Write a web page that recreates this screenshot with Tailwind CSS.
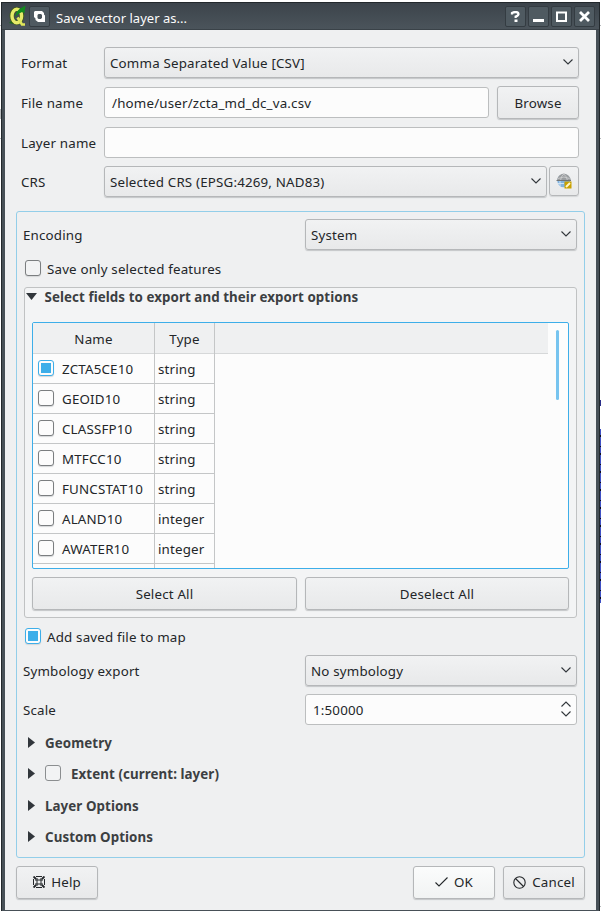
<!DOCTYPE html>
<html lang="en">
<head>
<meta charset="utf-8">
<title>Save vector layer as...</title>
<script src="https://cdn.jsdelivr.net/npm/@tailwindcss/browser@4"></script>
</head>
<body class="w-[601px] h-[911px] overflow-hidden bg-white flex text-[13.33px] leading-[18px] tracking-[0.18px] text-[#232629] font-['Noto_Sans',sans-serif]">

<!-- strip of the window behind, left edge -->
<div class="w-px pt-[25px] flex flex-col gap-[83px] shrink-0">
  <div class="h-px bg-[#b9bcbe]"></div><div class="h-[10px] bg-[#b9bcbe]"></div><div class="h-px -mt-[64px] bg-[#b9bcbe]"></div>
</div>

<div class="w-[599px] mt-[2px] h-[909px] bg-[#475057] border-l border-t border-[#22282c] shrink-0 flex flex-col border-r">
  <!-- title bar -->
  <div class="h-[27px] pl-[7px] pr-[4px] flex items-center bg-linear-to-b from-[#3c444b] to-[#4b545b] border-b border-[#3a4248] shrink-0">
    <svg class="w-[17px] h-[22px] shrink-0" viewBox="0 0 17 22">
      <path d="M0 18 4 14 5 19z" fill="#176c1c"/>
      <ellipse cx="7.800" cy="11" rx="4.900" ry="6.800" fill="none" stroke="#3c5a12" stroke-width="4.600"/>
      <ellipse cx="7.800" cy="11" rx="4.800" ry="6.700" fill="none" stroke="#e6ea6a" stroke-width="3.400"/>
      <path d="M8.500 12.500 13 19.500H16" stroke="#dfe65a" stroke-width="2.600" fill="none"/>
      <path d="M6 12 Q7.500 6 10.500 4L16.500 .5 15.500 8 13 7 Q9 8.500 6 12z" fill="#128a1e"/>
    </svg>
    <div class="ml-[3px] mt-[1px] w-[21px] h-[21px] rounded-[2px] border border-[#343c42] bg-[#4f5a61] flex items-center justify-center">
      <svg class="w-[11px] h-[11px]" viewBox="0 0 11 11"><path d="M1 0h7L10 2v1.500l1 1V11H4L1.500 9V7.500L0 6V1z" fill="#fff"/><path d="M4.500 3h2.500L8 4v2.500L7 8H4.500L3.500 7V4z" fill="#4b565d"/></svg>
    </div>
    <div class="ml-[6px] mt-[4px] text-[#fcfcfc] w-[200px] h-[18px] text-[13px] leading-[18px] tracking-[0.02px]">Save vector layer as...</div>
    <div class="ml-auto mt-[1px] flex gap-[2px]">
      <div class="w-[21px] h-[21px] rounded-[2px] border border-[#343c42] bg-[#4f5a61] flex items-center justify-center">
        <svg class="w-[11px] h-[11px]" viewBox="0 0 11 11"><path d="M2 3.500V2Q3.500 1 5.500 1 8.500 1 8.500 3 8.500 4.500 5.700 5.500V7" fill="none" stroke="#fff" stroke-width="2.300"/><path d="M4.500 8.500h3v2.500h-3z" fill="#fff"/></svg>
      </div>
      <div class="w-[21px] h-[21px] rounded-[2px] border border-[#343c42] bg-[#4f5a61] flex items-center justify-center">
        <svg class="w-[11px] h-[11px]" viewBox="0 0 11 11"><path d="M0 8h11v3H0z" fill="#fff"/></svg>
      </div>
      <div class="w-[21px] h-[21px] rounded-[2px] border border-[#343c42] bg-[#4f5a61] flex items-center justify-center">
        <svg class="w-[11px] h-[11px]" viewBox="0 0 11 11"><path d="M1 1.500h9v8.500H1z" fill="none" stroke="#fff" stroke-width="2"/></svg>
      </div>
      <div class="w-[21px] h-[21px] rounded-[2px] border border-[#343c42] bg-[#4f5a61] flex items-center justify-center">
        <svg class="w-[11px] h-[11px]" viewBox="0 0 11 11"><path d="M1 1 10 10M10 1 1 10" fill="none" stroke="#fff" stroke-width="2.800"/></svg>
      </div>
    </div>
  </div>

  <div class="ml-[3px] mr-[3px] h-[880px] bg-[#eff0f1] px-[11px] pt-[17px] flex flex-col shrink-0">
    <!-- file settings -->
    <div class="flex pl-[5px] pr-[6px] h-[31px] items-center shrink-0">
      <span class="w-[83px]">Format</span>
      <div class="flex-1 h-[31px] rounded-[3px] border border-[#b5b7b9] shadow-[0_1px_1px_#c4c6c8] bg-linear-to-b from-[#f1f2f3] to-[#e8e9ea] flex items-center justify-between pl-[5px] pr-[5px]"><span>Comma Separated Value [CSV]</span><svg class="w-[10px] h-[6px] -mt-px" viewBox="0 0 10 6"><path d="M.5.5 5 5 9.500.5" fill="none" stroke="#31363b" stroke-width="1.100"/></svg></div>
    </div>
    <div class="flex pl-[5px] pr-[6px] h-[33px] mt-[8px] items-center shrink-0">
      <span class="w-[83px]">File name</span>
      <div class="w-[385px] h-[31px] rounded-[3px] border border-[#bcbebf] bg-[#fcfcfc] flex items-center pl-[7px]">/home/user/zcta_md_dc_va.csv</div>
      <div class="ml-[8px] flex-1 h-[33px] rounded-[3px] border border-[#b5b7b9] shadow-[0_1px_1px_#c4c6c8] bg-linear-to-b from-[#f1f2f3] to-[#e8e9ea] flex items-center justify-center">Browse</div>
    </div>
    <div class="flex pl-[5px] pr-[6px] h-[31px] mt-[8px] items-center shrink-0">
      <span class="w-[83px] whitespace-nowrap">Layer name</span>
      <div class="flex-1 h-[31px] rounded-[3px] border border-[#bcbebf] bg-[#fcfcfc]"></div>
    </div>
    <div class="flex pl-[5px] pr-[6px] h-[31px] mt-[8px] items-center shrink-0">
      <span class="w-[83px]">CRS</span>
      <div class="w-[443px] h-[31px] rounded-[3px] border border-[#b5b7b9] shadow-[0_1px_1px_#c4c6c8] bg-linear-to-b from-[#f1f2f3] to-[#e8e9ea] flex items-center justify-between pl-[5px] pr-[5px]"><span>Selected CRS (EPSG:4269, NAD83)</span><svg class="w-[10px] h-[6px] -mt-px" viewBox="0 0 10 6"><path d="M.5.5 5 5 9.500.5" fill="none" stroke="#31363b" stroke-width="1.100"/></svg></div>
      <div class="ml-[2px] flex-1 h-[30px] mb-[1px] rounded-[3px] border border-[#b5b7b9] shadow-[0_1px_1px_#d4d6d8] bg-linear-to-b from-[#f1f2f3] to-[#e8e9ea] flex items-center justify-center">
        <svg class="w-[16px] h-[16px]" viewBox="0 0 16 16">
          <circle cx="7.800" cy="7.800" r="6.500" fill="#7fb2e0"/>
          <path d="M1 7.500Q2 1 7.800.5 13.500 1 15 7.500z" fill="#9a9d9f"/>
          <path d="M2 5.500Q8 2.500 13.500 5.500M4.500 7.500Q5 3 7.800 1 10.500 3 11.500 7.500" fill="none" stroke="#d0d2d3" stroke-width=".8"/>
          <path d="M.5 7.500h14.500" stroke="#707476"/>
          <path d="M4 8v5M2 10.500h6" stroke="#cfe3f5" stroke-width="1"/>
          <path d="M8.500 8.500h7v7h-7z" fill="#c9a100"/>
          <path d="M10 14 14 10" stroke="#fff6c8" stroke-width="2"/>
        </svg>
      </div>
    </div>

    <!-- options group -->
    <div class="mt-[14px] h-[647px] rounded-[3px] border border-[#93cee9] px-[7px] pt-[7px] flex flex-col shrink-0">
      <div class="flex h-[31px] items-center -ml-px shrink-0">
        <span class="w-[282px]">Encoding</span>
        <div class="w-[272px] h-[31px] rounded-[3px] border border-[#b5b7b9] shadow-[0_1px_1px_#c4c6c8] bg-linear-to-b from-[#f1f2f3] to-[#e8e9ea] flex items-center justify-between pl-[5px] pr-[5px]"><span>System</span><svg class="w-[10px] h-[6px] -mt-px" viewBox="0 0 10 6"><path d="M.5.5 5 5 9.500.5" fill="none" stroke="#31363b" stroke-width="1.100"/></svg></div>
      </div>
      <div class="flex mt-[10px] h-[16px] pl-[1px] items-center shrink-0">
        <div class="w-[16px] h-[16px] rounded-[3px] border border-[#7b7e80] bg-[#f2f3f4] shadow-[0_1px_1px_#d4d6d8]"></div>
        <span class="ml-[6px] mt-[1px]">Save only selected features</span>
      </div>

      <div class="mt-[11px] w-[553px] h-[331px] rounded-[3px] border border-[#c0c2c3] bg-[#f3f4f5] px-[7px] flex flex-col shrink-0">
        <div class="h-[34px] flex items-start -ml-[6px] font-bold tracking-[0.08px] text-[#3c3f42]">
          <svg class="w-[11px] h-[7px] mt-[5px]" viewBox="0 0 11 7"><path d="M0 0h11L5.500 7z" fill="#31363b"/></svg>
          <span class="ml-[7.500px]">Select fields to export and their export options</span>
        </div>
        <div class="w-[537px] h-[247px] rounded-[2px] border border-[#3daee9] bg-[#fcfcfc] flex overflow-hidden shrink-0">
          <div class="w-[515px]">
            <div class="flex h-[31px] bg-[#eff0f1] border-b border-[#d6d8d9] leading-[30px] text-center">
              <div class="w-[122px] border-r border-[#c4c6c7] h-[31px] pt-px">Name</div>
              <div class="w-[60px] border-r border-[#c4c6c7] h-[31px] pt-px">Type</div>
            </div>
            <div id="rows" class="w-[182px]"></div>
          </div>
          <div class="w-[3px] h-[70px] mt-[7px] ml-[8px] rounded-full bg-[#77c4ef]"></div>
        </div>
        <div class="flex mt-[8px] gap-[8px] w-[537px] h-[33px]">
          <div class="w-[265px] h-[33px] rounded-[3px] border border-[#b5b7b9] shadow-[0_1px_1px_#c4c6c8] bg-linear-to-b from-[#f1f2f3] to-[#e8e9ea] flex items-center justify-center">Select All</div>
          <div class="w-[264px] h-[33px] rounded-[3px] border border-[#b5b7b9] shadow-[0_1px_1px_#c4c6c8] bg-linear-to-b from-[#f1f2f3] to-[#e8e9ea] flex items-center justify-center">Deselect All</div>
        </div>
      </div>

      <div class="flex mt-[10px] h-[16px] pl-[1px] items-center shrink-0">
        <div class="w-[16px] h-[16px] rounded-[3px] border border-[#3daee9] bg-[#fcfcfc] p-[2px] shadow-[0_1px_1px_#d4d6d8]"><div class="w-[10px] h-[10px] bg-[#3daee9]"></div></div>
        <span class="ml-[6px] mt-[1px]">Add saved file to map</span>
      </div>
      <div class="flex mt-[11px] h-[31px] items-center -ml-px shrink-0">
        <span class="w-[282px]">Symbology export</span>
        <div class="w-[272px] h-[31px] rounded-[3px] border border-[#b5b7b9] shadow-[0_1px_1px_#c4c6c8] bg-linear-to-b from-[#f1f2f3] to-[#e8e9ea] flex items-center justify-between pl-[5px] pr-[5px]"><span>No symbology</span><svg class="w-[10px] h-[6px] -mt-px" viewBox="0 0 10 6"><path d="M.5.5 5 5 9.500.5" fill="none" stroke="#31363b" stroke-width="1.100"/></svg></div>
      </div>
      <div class="flex mt-[8px] h-[31px] items-center -ml-px shrink-0">
        <span class="w-[282px]">Scale</span>
        <div class="w-[272px] h-[31px] rounded-[3px] border border-[#bcbebf] bg-[#fcfcfc] flex items-center justify-between pl-[7px] pr-[5px]"><span>1:50000</span><svg class="w-[10px] h-[16px] -mt-px" viewBox="0 0 10 16"><path d="M.5 5.500 5 1 9.500 5.500M.5 10.500 5 15 9.500 10.500" fill="none" stroke="#31363b" stroke-width="1.100"/></svg></div>
      </div>
      <div class="flex mt-[9px] h-[18px] items-center pl-[4px] font-bold tracking-[0.08px] text-[#3c3f42] shrink-0">
        <svg class="w-[7px] h-[11px] -mt-[2px]" viewBox="0 0 7 11"><path d="M0 0v11L7 5.500z" fill="#31363b"/></svg>
        <span class="ml-[10px]">Geometry</span>
      </div>
      <div class="flex mt-[13px] h-[18px] items-center pl-[4px] font-bold tracking-[0.08px] text-[#3c3f42] shrink-0">
        <svg class="w-[7px] h-[11px] -mt-[2px]" viewBox="0 0 7 11"><path d="M0 0v11L7 5.500z" fill="#31363b"/></svg>
        <div class="ml-[10px] -mt-[2px] w-[16px] h-[16px] rounded-[3px] border border-[#8b8e90] bg-[#f2f3f4]"></div>
        <span class="ml-[10px]">Extent (current: layer)</span>
      </div>
      <div class="flex mt-[14px] h-[18px] items-center pl-[4px] font-bold tracking-[0.08px] text-[#3c3f42] shrink-0">
        <svg class="w-[7px] h-[11px] -mt-[2px]" viewBox="0 0 7 11"><path d="M0 0v11L7 5.500z" fill="#31363b"/></svg>
        <span class="ml-[10px]">Layer Options</span>
      </div>
      <div class="flex mt-[13px] h-[18px] items-center pl-[4px] font-bold tracking-[0.08px] text-[#3c3f42] shrink-0">
        <svg class="w-[7px] h-[11px] -mt-[2px]" viewBox="0 0 7 11"><path d="M0 0v11L7 5.500z" fill="#31363b"/></svg>
        <span class="ml-[10px]">Custom Options</span>
      </div>
    </div>

    <!-- dialog buttons -->
    <div class="flex mt-[8px] h-[33px] gap-[8px] shrink-0">
      <div class="w-[82px] mr-auto rounded-[3px] border border-[#b5b7b9] shadow-[0_1px_1px_#c4c6c8] bg-linear-to-b from-[#f1f2f3] to-[#e8e9ea] flex items-center justify-center gap-[6px] pb-px">
        <svg class="w-[12px] h-[12px]" viewBox="0 0 12 12" fill="none" stroke="#232629"><path d="M3 .5h6M3 11.500h6M.5 3v6M11.500 3v6M4 2v8M8 2v8M2 4h8M2 8h8"/><path d="M.5.5 3 3M11.500.5 9 3M.5 11.500 3 9M11.500 11.500 9 9" stroke-width="1.900"/></svg>
        <span>Help</span>
      </div>
      <div class="w-[82px] rounded-[3px] border border-[#b5b7b9] shadow-[0_1px_1px_#c4c6c8] bg-linear-to-b from-[#fbfcfc] to-[#f1f3f3] flex items-center justify-center gap-[6px] pb-px">
        <svg class="w-[13px] h-[10px]" viewBox="0 0 13 10"><path d="M.5 5.500 4 9 12.500.5" fill="none" stroke="#232629" stroke-width="1.100"/></svg>
        <span>OK</span>
      </div>
      <div class="w-[82px] rounded-[3px] border border-[#b5b7b9] shadow-[0_1px_1px_#c4c6c8] bg-linear-to-b from-[#f1f2f3] to-[#e8e9ea] flex items-center justify-center gap-[6px] pb-px">
        <svg class="w-[13px] h-[13px]" viewBox="0 0 13 13" fill="none" stroke="#232629" stroke-width="1.100"><circle cx="6.500" cy="6.500" r="5.700"/><path d="M2.500 2.500 10.500 10.500"/></svg>
        <span>Cancel</span>
      </div>
    </div>
  </div>
</div>

<!-- map canvas behind, right edge -->
<div class="w-px shrink-0 flex flex-col">
  <div class="mt-[25px] h-px bg-[#b9bcbe]"></div>
  <div class="mt-[112px] h-px bg-[#b9bcbe]"></div>
  <div class="mt-[261px] h-[6px] bg-[#2b2f8a]"></div>
  <div class="mt-[23px] h-[174px] bg-[repeating-linear-gradient(#3f51c4_0_6px,#0b0d20_6px_8px,#3f51c4_8px_17px,#0b0d20_17px_18px)]"></div>
  <div class="mt-[303px] h-px bg-[#b9bcbe]"></div>
</div>

<script>
const fields = [["ZCTA5CE10","string"],["GEOID10","string"],["CLASSFP10","string"],["MTFCC10","string"],["FUNCSTAT10","string"],["ALAND10","integer"],["AWATER10","integer"],["",""]];
document.getElementById("rows").innerHTML = fields.map(([name, type], i) => `
  <div class="flex h-[30px] border-b border-[#c4c6c7]">
    <div class="w-[122px] border-r border-[#c4c6c7] flex items-center pl-[5px] pb-px">
      ${name && (i === 0
        ? '<div class="w-[16px] h-[16px] rounded-[3px] border border-[#3daee9] bg-[#fcfcfc] p-[2px] shadow-[0_1px_1px_#d4d6d8]"><div class="w-[10px] h-[10px] bg-[#3daee9]"></div></div>'
        : '<div class="w-[16px] h-[16px] rounded-[3px] border border-[#7b7e80] bg-[#fcfcfc] shadow-[0_1px_1px_#d4d6d8]"></div>')}
      <span class="ml-[8px] mt-[2px]">${name}</span>
    </div>
    <div class="w-[60px] border-r border-[#c4c6c7] flex items-center pl-[3px] pt-px">${type}</div>
  </div>`).join("");
</script>
</body>
</html>
